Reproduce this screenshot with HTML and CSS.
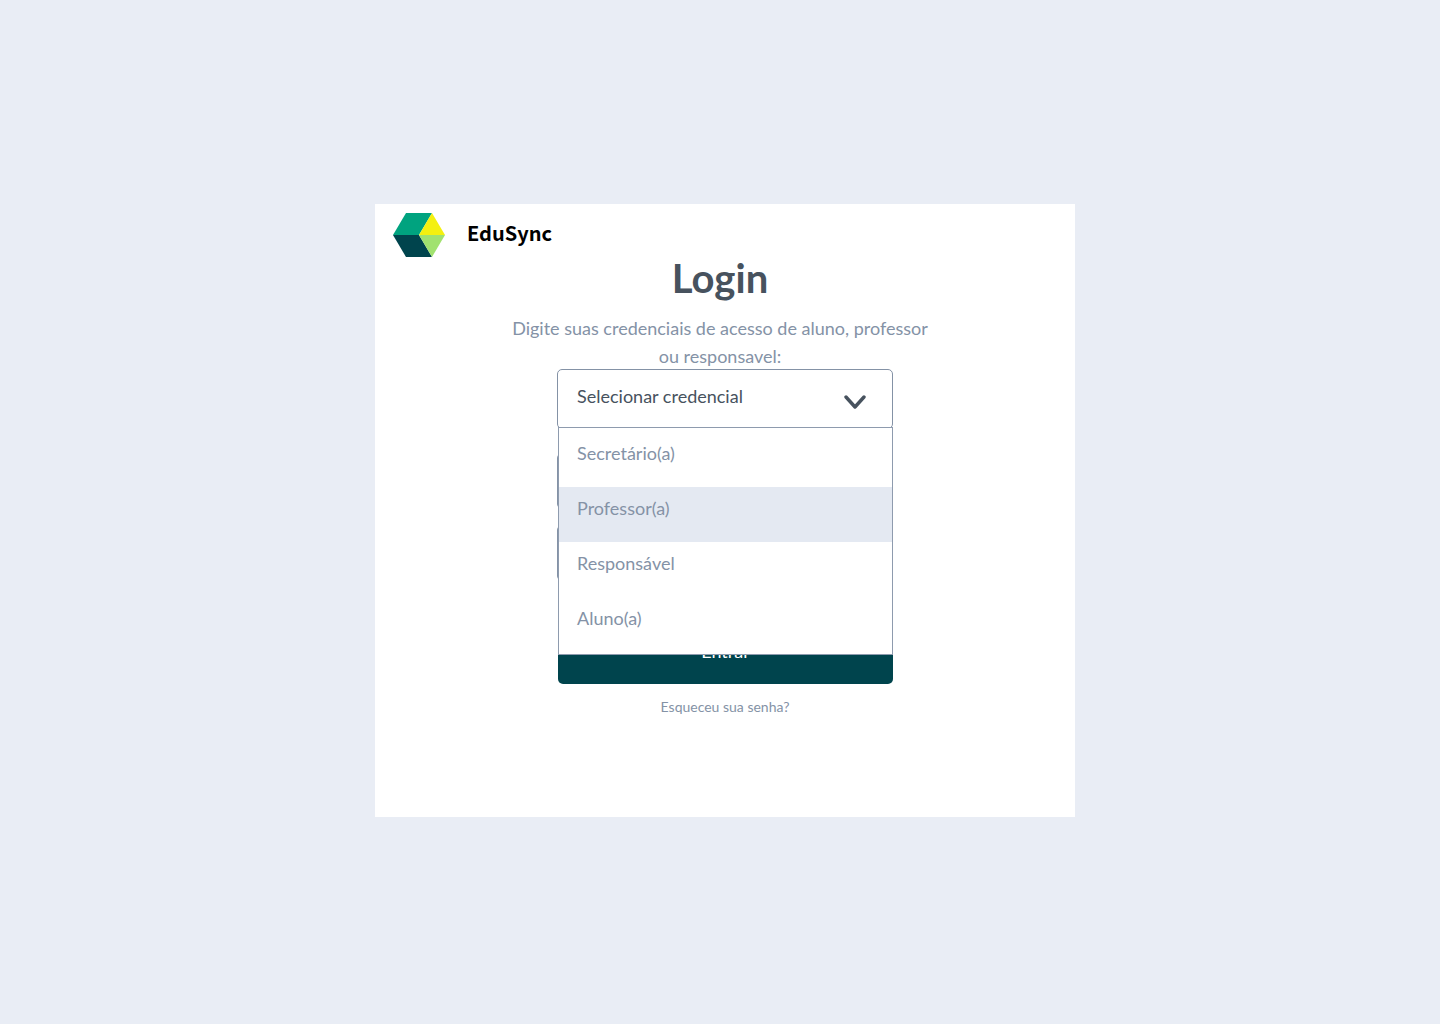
FILE: index.html
```html
<!DOCTYPE html>
<html lang="pt-BR">
<head>
<meta charset="utf-8">
<meta name="viewport" content="width=device-width, initial-scale=1">
<title>EduSync - Login</title>
<link rel="stylesheet" href="styles.css">
</head>
<body>
<main class="card">
  <header class="brand">
    <svg class="brand-logo" viewBox="0 0 52 44" aria-hidden="true">
      <path fill="#00a37f" d="M13 0H39L26 22H0Z"/>
      <path fill="#f4f010" d="M39 0L52 22H26Z"/>
      <path fill="#00444d" d="M0 22H26L39 44H13Z"/>
      <path fill="#a1e26f" d="M26 22H52L39 44Z"/>
    </svg>
    <span class="brand-name">EduSync</span>
  </header>
  <div class="intro">
    <h1 class="title">Login</h1>
    <p class="lead">Digite suas credenciais de acesso de aluno, professor ou responsavel:</p>
  </div>
  <form class="form">
    <div class="picker">
      <select class="field picker-select" aria-label="Credencial">
        <option>Selecionar credencial</option>
      </select>
      <svg class="picker-arrow" viewBox="0 0 22 14" aria-hidden="true">
        <path d="M2 2L11 12L20 2" fill="none" stroke="#47525e" stroke-width="3.4" stroke-linecap="round" stroke-linejoin="round"/>
      </svg>
      <ul class="menu" role="listbox" aria-label="Credencial">
        <li class="menu-item" role="option">Secretário(a)</li>
        <li class="menu-item menu-item-active" role="option" aria-selected="true">Professor(a)</li>
        <li class="menu-item" role="option">Responsável</li>
        <li class="menu-item" role="option">Aluno(a)</li>
      </ul>
    </div>
    <input class="field" type="text" aria-label="Usuário">
    <input class="field" type="password" aria-label="Senha">
    <button class="submit" type="submit">Entrar</button>
    <a class="forgot" href="#">Esqueceu sua senha?</a>
  </form>
</main>
</body>
</html>
```
FILE: styles.css
```css
* {
  box-sizing: border-box;
}

body {
  margin: 0;
  min-height: 100vh;
  padding: 0 0 3px 10px;
  display: flex;
  align-items: center;
  justify-content: center;
  background: #e9edf5;
  color: #47525e;
  font-family: Lato, "Liberation Sans", sans-serif;
  font-size: 18px;
  line-height: 28px;
}

.card {
  width: 100%;
  max-width: 700px;
  padding-bottom: 100px;
  background: #fff;
}

.brand {
  display: flex;
  align-items: flex-start;
  gap: 22px;
  padding: 9px 18px 0;
}

.brand-logo {
  width: 52px;
  height: 44px;
}

.brand-name {
  color: #000;
  font-family: "Noto Sans CJK JP", "Noto Sans", sans-serif;
  font-size: 20px;
  font-weight: 700;
  line-height: 40px;
}

.intro {
  padding-right: 10px;
  text-align: center;
}

.title {
  margin: 0;
  font-size: 40px;
  line-height: 42px;
  font-weight: 700;
}

.lead {
  max-width: 420px;
  margin: 15px auto 0;
  color: #8492a6;
}

.form {
  display: flex;
  flex-direction: column;
  gap: 16px;
  max-width: 336px;
  margin: -1px auto 0;
}

.picker {
  position: relative;
  margin-bottom: 8px;
}

.field {
  display: block;
  width: 100%;
  height: 56px;
  padding: 0 19px;
  border: 1px solid #8492a6;
  border-radius: 5px;
  background: #fff;
  color: #47525e;
  font: inherit;
}

.picker-select {
  appearance: none;
  height: 60px;
  padding-bottom: 6px;
}

.picker-arrow {
  position: absolute;
  top: 26px;
  right: 27px;
  width: 22px;
  height: 14px;
  pointer-events: none;
}

.menu {
  position: absolute;
  z-index: 1;
  top: 58px;
  left: 1px;
  right: 0;
  margin: 0;
  padding: 4px 0 2px;
  border: 1px solid #8e9bae;
  background: #fff;
  color: #8492a6;
  list-style: none;
}

.menu-item {
  padding: 7px 18px 20px;
}

.menu-item-active {
  background: #e4e9f2;
}

.submit {
  height: 66px;
  margin-top: 21px;
  margin-left: 1px;
  border: 0;
  border-radius: 5px;
  background: #00444d;
  color: #fff;
  font: inherit;
}

.forgot {
  align-self: center;
  margin-top: -4px;
  color: #8492a6;
  font-size: 14px;
  line-height: 21px;
  text-decoration: none;
}
```
